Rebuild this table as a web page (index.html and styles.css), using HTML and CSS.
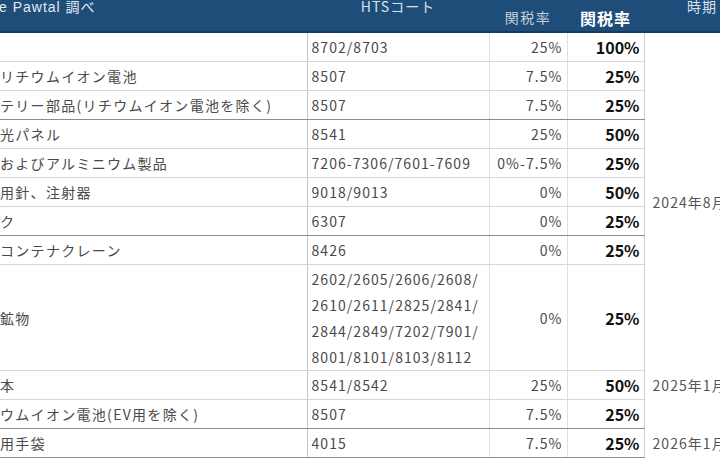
FILE: index.html
```html
<!DOCTYPE html>
<html lang="ja">
<head>
<meta charset="utf-8">
<link rel="stylesheet" href="styles.css">
</head>
<body>
<table class="tariff">
  <colgroup>
    <col class="c-name"><col class="c-hts"><col class="c-old"><col class="c-new"><col class="c-time">
  </colgroup>
  <thead>
    <tr>
      <th><div class="hc h-src">e Pawtal 調べ</div></th>
      <th><div class="hc h-top">HTSコート</div></th>
      <th><div class="hc h-low">関税率</div></th>
      <th><div class="hc h-bold">関税率</div></th>
      <th><div class="hc h-top h-time">時期</div></th>
    </tr>
  </thead>
  <tbody>
    <tr><td class="name"></td><td class="hts">8702/8703</td><td class="old">25%</td><td class="new">100%</td><td class="time" rowspan="9">2024年8月</td></tr>
    <tr><td class="name">リチウムイオン電池</td><td class="hts">8507</td><td class="old">7.5%</td><td class="new">25%</td></tr>
    <tr class="grp"><td class="name">テリー部品(リチウムイオン電池を除く)</td><td class="hts">8507</td><td class="old">7.5%</td><td class="new">25%</td></tr>
    <tr><td class="name">光パネル</td><td class="hts">8541</td><td class="old">25%</td><td class="new">50%</td></tr>
    <tr><td class="name">およびアルミニウム製品</td><td class="hts">7206-7306/7601-7609</td><td class="old">0%-7.5%</td><td class="new">25%</td></tr>
    <tr><td class="name">用針、注射器</td><td class="hts">9018/9013</td><td class="old">0%</td><td class="new">50%</td></tr>
    <tr class="grp"><td class="name">ク</td><td class="hts">6307</td><td class="old">0%</td><td class="new">25%</td></tr>
    <tr><td class="name">コンテナクレーン</td><td class="hts">8426</td><td class="old">0%</td><td class="new">25%</td></tr>
    <tr class="tall"><td class="name">鉱物</td><td class="hts">2602/2605/2606/2608/<br>2610/2611/2825/2841/<br>2844/2849/7202/7901/<br>8001/8101/8103/8112</td><td class="old">0%</td><td class="new">25%</td></tr>
    <tr><td class="name">本</td><td class="hts">8541/8542</td><td class="old">25%</td><td class="new">50%</td><td class="time">2025年1月</td></tr>
    <tr class="grp"><td class="name">ウムイオン電池(EV用を除く)</td><td class="hts">8507</td><td class="old">7.5%</td><td class="new">25%</td><td class="time"></td></tr>
    <tr class="grp"><td class="name">用手袋</td><td class="hts">4015</td><td class="old">7.5%</td><td class="new">25%</td><td class="time">2026年1月</td></tr>
  </tbody>
</table>
</body>
</html>
```
FILE: styles.css
```css
html, body {
  margin: 0;
  padding: 0;
  background: #ffffff;
}

body {
  font-family: "Noto Sans CJK JP", "Noto Sans", sans-serif;
  overflow: hidden;
}

.tariff {
  border-collapse: collapse;
  table-layout: fixed;
  width: 730px;
}

.c-name { width: 307px; }
.c-hts { width: 182px; }
.c-old { width: 78px; }
.c-new { width: 77px; }
.c-time { width: 86px; }

/* header */
.tariff thead th {
  background: #1f4d7a;
  padding: 0;
  font-weight: 400;
  border-bottom: 2px solid #173c61;
  vertical-align: top;
}

.hc {
  box-sizing: border-box;
  height: 31px;
  overflow: hidden;
  white-space: nowrap;
}

.h-src {
  text-align: left;
  color: #e3e9f0;
  font-size: 14px;
  line-height: 15px;
  letter-spacing: 1px;
  font-family: "Liberation Sans", "Noto Sans CJK JP", sans-serif;
  margin-left: -1px;
}

.h-top {
  text-align: center;
  color: #d9e2ec;
  font-size: 14px;
  line-height: 12px;
  letter-spacing: 1px;
}

.h-time {
  text-align: left;
  padding-left: 43px;
}

.h-low {
  text-align: center;
  color: #c3cfdc;
  font-size: 14px;
  line-height: 16px;
  letter-spacing: 1.5px;
  padding-top: 9px;
}

.h-bold {
  text-align: center;
  color: #ffffff;
  font-size: 16px;
  font-weight: 700;
  line-height: 18px;
  letter-spacing: 1px;
  padding-top: 9px;
}

/* body */
.tariff td {
  height: 28px;
  padding: 0 4px;
  font-size: 14px;
  line-height: 20px;
  letter-spacing: 1.05px;
  color: #4a4a4a;
  border-bottom: 1px solid #d6d6d6;
  white-space: nowrap;
  overflow: hidden;
  vertical-align: middle;
}

.tariff td.name {
  padding-left: 0;
  letter-spacing: 1.3px;
  border-right: 1px solid #c4c4c4;
}

.tariff td.hts {
  border-right: 1px solid #e0e0e0;
}

.tariff td.old {
  text-align: right;
  border-right: 1px solid #e0e0e0;
}

.tariff td.new {
  text-align: right;
  font-size: 16px;
  font-weight: 700;
  letter-spacing: 0;
  color: #111111;
  border-right: 1px solid #d0d0d0;
}

.tariff td.time {
  border-bottom: none;
  padding-left: 8px;
  color: #555555;
}

.tariff tr.grp td {
  border-bottom: 1px solid #8c8c8c;
}

.tariff tr.grp td.time {
  border-bottom: none;
}

.tariff tr.tall td {
  height: 105px;
}

.tariff tr.tall td.hts {
  line-height: 26px;
}
```
